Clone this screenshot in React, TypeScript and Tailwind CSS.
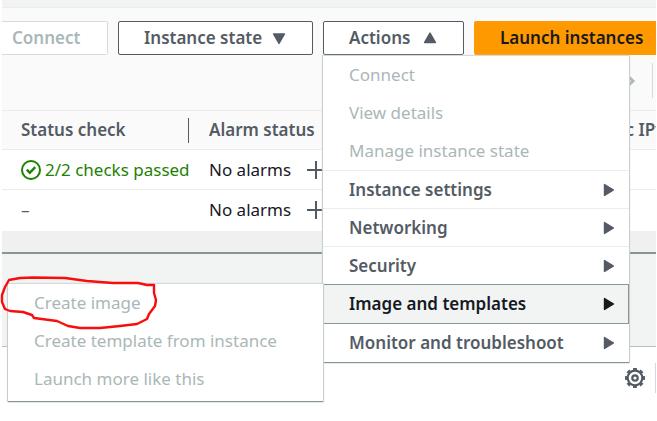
import type { ReactNode } from 'react';

function Caret({ dir }: { dir: 'up' | 'down' | 'right' }) {
  const points = {
    up: '8,3 13.5,12.5 2.5,12.5',
    down: '2.5,4 13.5,4 8,13.5',
    right: '4.5,2.5 13.5,8 4.5,13.5',
  }[dir];
  return (
    <svg viewBox="0 0 16 16" className="size-4 shrink-0" fill="currentColor" stroke="currentColor" strokeWidth="1.4" strokeLinejoin="round" aria-hidden="true">
      <polygon points={points} />
    </svg>
  );
}

function Plus() {
  return (
    <button aria-label="Create alarm" className="block">
      <svg viewBox="0 0 18 18" className="size-[18px]" fill="none" stroke="#545b64" strokeWidth="2" aria-hidden="true">
        <path d="M9 0v18M0 9h18" />
      </svg>
    </button>
  );
}

function StatusOk() {
  return (
    <svg viewBox="0 0 20 20" className="size-5 shrink-0" fill="none" stroke="#1d8102" strokeWidth="2" aria-hidden="true">
      <circle cx="10" cy="10" r="9" />
      <path d="M5.8 9.6l3 3.2 5.4-5.6" strokeWidth="2.4" />
    </svg>
  );
}

function Gear() {
  const teeth = [0, 45, 90, 135, 180, 225, 270, 315];
  return (
    <svg viewBox="-10 -10 20 20" className="size-5" fill="none" stroke="#545b64" aria-hidden="true">
      <circle r="7.3" strokeWidth="2.2" />
      {teeth.map((a) => (
        <path key={a} d="M-1.9 -8.9H1.9" strokeWidth="2.2" transform={`rotate(${a})`} />
      ))}
      <circle r="2.7" strokeWidth="2.2" />
    </svg>
  );
}

function AlarmCell() {
  return (
    <td className="border-t border-[#eaeded] p-0 pl-5">
      <div className="flex items-center">
        <span className="w-[98px] text-[#16191f]">No alarms</span>
        <Plus />
      </div>
    </td>
  );
}

function Disabled({ children }: { children: ReactNode }) {
  return (
    <li>
      <button disabled className="flex h-[38px] w-full items-center px-[26px] text-[#aab7b8]">
        {children}
      </button>
    </li>
  );
}

function Group({ children }: { children: ReactNode }) {
  return (
    <li className="border-t border-[#eaeded]">
      <button className="flex h-[37px] w-full items-center justify-between pr-[13px] pl-[26px] font-semibold">
        {children}
        <Caret dir="right" />
      </button>
    </li>
  );
}

const menu =
  'absolute z-10 bg-white shadow-[0_1px_1px_0_#879596,0_0_1px_1px_#d5dbdb]';
const button =
  'flex h-[34px] items-center rounded-xs border border-[#545b64] bg-white px-[25px] font-semibold whitespace-nowrap';

export default function App() {
  return (
    <div className="min-h-screen overflow-hidden bg-white pr-px pl-0.5 font-['Noto_Sans','Open_Sans',sans-serif] text-[17px] leading-6 text-[#545b64]">
      <div className="h-[7px] bg-[#f2f3f3]" />
      <header className="border-t border-[#eaeded] bg-[#fafafa]">
        <div className="flex gap-2.5 pt-[13px]">
          <button disabled className="h-[34px] w-[106px] rounded-r-xs border border-l-0 border-[#d5dbdb] bg-white pl-2.5 text-left font-semibold text-[#aab7b8]">
            Connect
          </button>
          <button className={`${button} w-[195px] justify-between`}>
            Instance state
            <Caret dir="down" />
          </button>
          <div className="relative w-[141px]">
            <button aria-expanded="true" className={`${button} w-full justify-between`}>
              Actions
              <Caret dir="up" />
            </button>
            <ul className={`${menu} top-[35px] left-0 w-[306px]`}>
              <Disabled>Connect</Disabled>
              <Disabled>View details</Disabled>
              <Disabled>Manage instance state</Disabled>
              <Group>Instance settings</Group>
              <Group>Networking</Group>
              <Group>Security</Group>
              <li className="relative">
                <button aria-expanded="true" className="flex h-10 w-full items-center justify-between border border-[#879596] bg-[#f2f3f3] pr-3 pl-[25px] font-semibold text-[#16191f]">
                  Image and templates
                  <Caret dir="right" />
                </button>
                <ul className={`${menu} top-0 right-full w-[315px] pb-[3px]`}>
                  <Disabled>Create image</Disabled>
                  <Disabled>Create template from instance</Disabled>
                  <Disabled>Launch more like this</Disabled>
                  <li className="pointer-events-none absolute -top-2 -left-2" aria-hidden="true">
                    <svg viewBox="0 0 160 60" className="h-[60px] w-[160px]" fill="none" stroke="#f80d0d" strokeWidth="2.4" strokeLinejoin="round" strokeLinecap="round">
                      <path d="M147 9L154 9L154 17L156 24L155 30L149 38L147 43L137 48L120 50L100 52L80 52L68 50L57 45L34 42L32 39L23 36L10 35L5 33L2 26L2 19L5 11L9 4L20 2L33 1.5L65 2L87 5L113 7L138 7L147 9" />
                    </svg>
                  </li>
                </ul>
              </li>
              <li>
                <button className="flex h-[38px] w-full items-center justify-between pr-[13px] pl-[26px] font-semibold">
                  Monitor and troubleshoot
                  <Caret dir="right" />
                </button>
              </li>
            </ul>
          </div>
          <button className="h-[34px] min-w-[182px] flex-1 rounded-l-xs bg-[#ff9900] pl-[26px] text-left font-semibold whitespace-nowrap text-[#16191f]">
            Launch instances
          </button>
        </div>
        <div className="flex h-[55px] items-center justify-end pr-[3px] pb-1">
          <button aria-label="Next page" className="mr-[17px] text-[#aab7b8]">
            <svg viewBox="0 0 10 14" className="h-3.5 w-2.5" fill="none" stroke="currentColor" strokeWidth="2.8" aria-hidden="true">
              <path d="M2 1l6 6-6 6" />
            </svg>
          </button>
          <div className="h-[35px] w-px bg-[#d5dbdb]" />
        </div>
      </header>
      <table className="w-full table-fixed border-collapse text-left">
        <thead className="bg-[#fafafa]">
          <tr className="h-[39px]">
            <th className="w-[187px] border-t border-[#eaeded] p-0 font-semibold">
              <div className="flex h-[25px] items-center border-r border-[#545b64] pl-[19px]">Status check</div>
            </th>
            <th className="border-t border-[#eaeded] p-0 pl-5 font-semibold">Alarm status</th>
            <th className="w-[72px] overflow-hidden border-t border-[#eaeded] p-0 font-semibold whitespace-nowrap">Public IPv4 DNS</th>
          </tr>
        </thead>
        <tbody>
          <tr className="h-10">
            <td className="border-t border-[#eaeded] p-0">
              <div className="flex items-center gap-1 pl-[19px] whitespace-nowrap text-[#1d8102]">
                <StatusOk />
                2/2 checks passed
              </div>
            </td>
            <AlarmCell />
            <td className="border-t border-[#eaeded]" />
          </tr>
          <tr className="h-[41px]">
            <td className="border-t border-[#eaeded] p-0 pl-[19px]">–</td>
            <AlarmCell />
            <td className="border-t border-[#eaeded]" />
          </tr>
        </tbody>
      </table>
      <div className="h-[21px] bg-[#f0f0f0]" />
      <div className="h-[95px] border-t-2 border-b border-t-[#879596] border-b-[#b8bfc0] bg-[#f2f3f3]" />
      <div className="flex justify-end pt-4">
        <div className="flex h-[30px] items-center border-r border-[#d5dbdb] pr-[10px]">
          <button aria-label="Preferences">
            <Gear />
          </button>
        </div>
      </div>
    </div>
  );
}
